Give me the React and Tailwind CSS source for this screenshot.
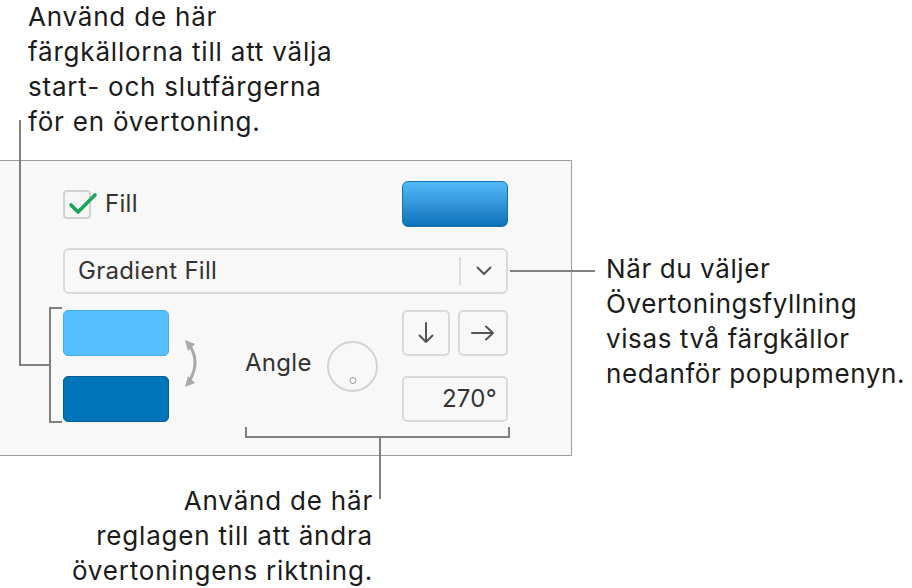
import React from "react";

const font = { fontFamily: "Inter, 'Noto Sans', sans-serif" };

function SwapIcon() {
  return (
    <svg width="16" height="48" viewBox="0 0 16 48" className="block">
      <path d="M5 6 Q15 22 5 40" fill="none" stroke="#a9a9a9" strokeWidth="3" strokeLinecap="round" />
      <path d="M0 0 L10 4 L3 11 Z" fill="#a9a9a9" />
      <path d="M0 47 L10 43 L3 36 Z" fill="#a9a9a9" />
    </svg>
  );
}

export default function App() {
  return (
    <div className="relative w-[912px] h-[588px] bg-white overflow-hidden text-[#1b1b1b]" style={font}>
      {/* top callout text */}
      <div className="pl-[28px] -mt-[1px] text-[26px] leading-[35px] tracking-[0.8px]">
        <div>Använd de här</div>
        <div>färgkällorna till att välja</div>
        <div>start- och slutfärgerna</div>
        <div>för en övertoning.</div>
      </div>

      <div className="flex mt-[21px]">
        {/* panel */}
        <div className="w-[572px] h-[296px] shrink-0 border border-[#9c9c9c] border-l-0 bg-[#f8f8f8] pl-[63px] pr-[63px] pt-[20px] text-[24px] tracking-[0.3px] text-[#333]">
          <div className="flex items-center justify-between h-[46px]">
            <div className="flex items-center">
              <div className="relative w-[28px] h-[29px] rounded-[4px] border-2 border-[#d2d2d2] bg-[#f6f6f6]">
                <svg className="absolute left-[3px] top-[1px] overflow-visible" width="28" height="22" viewBox="0 0 28 22">
                  <path d="M3 12 L10 19 L27 2" fill="none" stroke="#17a65b" strokeWidth="3.6" strokeLinecap="round" strokeLinejoin="round" />
                </svg>
              </div>
              <span className="ml-[14px]">Fill</span>
            </div>
            <div className="w-[106px] h-[46px] rounded-[6px] border border-[#1671b0] bg-gradient-to-b from-[#52baf9] to-[#0a72b9]" />
          </div>

          <div className="mt-[21px] h-[46px] rounded-[6px] border-2 border-[#dadada] bg-[#f8f8f8] flex items-center pl-[13px]">
            <span className="flex-1">Gradient Fill</span>
            <div className="w-[2px] h-[28px] bg-[#dcdcdc]" />
            <div className="w-[45px] flex items-center justify-center">
              <svg width="16" height="10" viewBox="0 0 16 10">
                <path d="M1.5 1.5 L8 8 L14.5 1.5" fill="none" stroke="#555" strokeWidth="2" strokeLinecap="round" strokeLinejoin="round" />
              </svg>
            </div>
          </div>

          <div className="mt-[16px] flex items-center">
            <div className="flex flex-col gap-[20px] w-[106px]">
              <div className="h-[46px] rounded-[5px] border border-[#45aaec] bg-[#56bfff]" />
              <div className="h-[46px] rounded-[5px] border border-[#075d94] bg-[#0074b8]" />
            </div>
            <div className="ml-[16px] -mt-[4px]">
              <SwapIcon />
            </div>
            <span className="ml-[44px] w-[68px] -mt-[6px]">Angle</span>
            <div className="ml-[14px] relative w-[51px] h-[51px] rounded-full border-2 border-[#d4d4d4]">
              <div className="absolute left-1/2 bottom-[6px] -translate-x-1/2 w-[7px] h-[7px] rounded-full border-[1.5px] border-[#9a9a9a]" />
            </div>
            <div className="ml-[24px] flex flex-col gap-[20px] w-[106px]">
              <div className="flex gap-[8px]">
                <div className="w-[48px] h-[46px] rounded-[5px] border-2 border-[#dadada] flex items-center justify-center">
                  <svg width="16" height="22" viewBox="0 0 16 22">
                    <path d="M8 1 L8 20 M1.5 13.5 L8 20 L14.5 13.5" fill="none" stroke="#555" strokeWidth="2" strokeLinecap="round" strokeLinejoin="round" />
                  </svg>
                </div>
                <div className="w-[50px] h-[46px] rounded-[5px] border-2 border-[#dadada] flex items-center justify-center">
                  <svg width="24" height="16" viewBox="0 0 24 16">
                    <path d="M1 8 L22 8 M15 1.5 L22 8 L15 14.5" fill="none" stroke="#555" strokeWidth="2" strokeLinecap="round" strokeLinejoin="round" />
                  </svg>
                </div>
              </div>
              <div className="h-[46px] rounded-[5px] border-2 border-[#dadada] flex items-center justify-end pr-[9px]">
                270°
              </div>
            </div>
          </div>
        </div>

        {/* right callout text */}
        <div className="ml-[34px] mt-[91px] text-[26px] leading-[35px] tracking-[0.6px] whitespace-nowrap">
          <div>När du väljer</div>
          <div>Övertoningsfyllning</div>
          <div>visas två färgkällor</div>
          <div>nedanför popupmenyn.</div>
        </div>
      </div>

      {/* bottom callout text */}
      <div className="w-[373px] mt-[27px] text-right text-[26px] leading-[35px] tracking-[0.8px] whitespace-nowrap">
        <div>Använd de här</div>
        <div>reglagen till att ändra</div>
        <div>övertoningens riktning.</div>
      </div>

      {/* annotation lines */}
      <div className="absolute left-[19px] top-[120px] w-[2px] h-[246px] bg-[#808080]" />
      <div className="absolute left-[19px] top-[364px] w-[32px] h-[2px] bg-[#808080]" />
      <div className="absolute left-[49px] top-[307px] w-[2px] h-[116px] bg-[#808080]" />
      <div className="absolute left-[49px] top-[307px] w-[13px] h-[2px] bg-[#808080]" />
      <div className="absolute left-[49px] top-[421px] w-[13px] h-[2px] bg-[#808080]" />

      <div className="absolute left-[510px] top-[270px] w-[85px] h-[2px] bg-[#808080]" />

      <div className="absolute left-[245px] top-[436px] w-[265px] h-[2px] bg-[#808080]" />
      <div className="absolute left-[245px] top-[427px] w-[2px] h-[11px] bg-[#808080]" />
      <div className="absolute left-[508px] top-[427px] w-[2px] h-[11px] bg-[#808080]" />
      <div className="absolute left-[379px] top-[436px] w-[2px] h-[63px] bg-[#808080]" />
    </div>
  );
}
